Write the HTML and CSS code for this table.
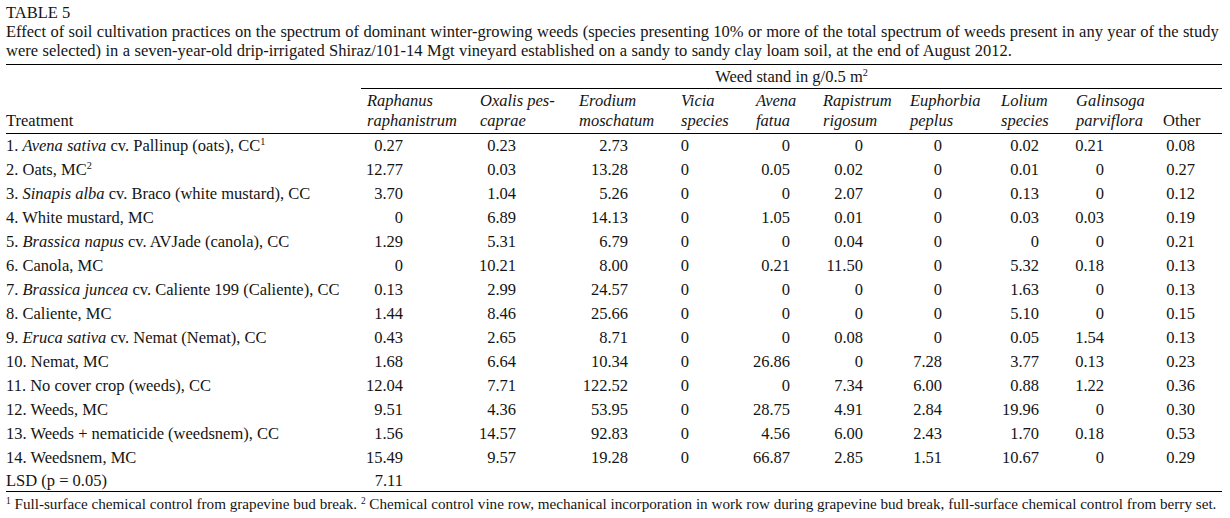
FILE: index.html
```html
<!DOCTYPE html>
<html lang="en">
<head>
<meta charset="utf-8">
<title>Table 5</title>
<link rel="stylesheet" href="styles.css">
</head>
<body>
<div class="page">
  <div class="title">TABLE 5</div>
  <p class="caption">Effect of soil cultivation practices on the spectrum of dominant winter-growing weeds (species presenting 10% or more of the total spectrum of weeds present in any year of the study<br>were selected) in a seven-year-old drip-irrigated Shiraz/101-14 Mgt vineyard established on a sandy to sandy clay loam soil, at the end of August 2012.</p>
  <table class="data">
    <colgroup>
      <col class="c-treat"><col class="c-rap"><col class="c-oxa"><col class="c-ero"><col class="c-vic"><col class="c-ave"><col class="c-rpi"><col class="c-eup"><col class="c-lol"><col class="c-gal"><col class="c-oth">
    </colgroup>
    <thead>
      <tr class="span-row"><th></th><th colspan="10" class="span">Weed stand in g/0.5 m<sup>2</sup></th></tr>
      <tr class="head-row">
        <th class="treat">Treatment</th>
        <th><i>Raphanus</i><br><i>raphanistrum</i></th>
        <th><i>Oxalis pes-</i><br><i>caprae</i></th>
        <th><i>Erodium</i><br><i>moschatum</i></th>
        <th><i>Vicia</i><br><i>species</i></th>
        <th><i>Avena</i><br><i>fatua</i></th>
        <th><i>Rapistrum</i><br><i>rigosum</i></th>
        <th><i>Euphorbia</i><br><i>peplus</i></th>
        <th><i>Lolium</i><br><i>species</i></th>
        <th><i>Galinsoga</i><br><i>parviflora</i></th>
        <th>Other</th>
      </tr>
    </thead>
    <tbody>
      <tr><td>1. <i>Avena sativa</i> cv. Pallinup (oats), CC<sup>1</sup></td><td>0.27</td><td>0.23</td><td>2.73</td><td>0</td><td>0</td><td>0</td><td>0</td><td>0.02</td><td>0.21</td><td>0.08</td></tr>
      <tr><td>2. Oats, MC<sup>2</sup></td><td>12.77</td><td>0.03</td><td>13.28</td><td>0</td><td>0.05</td><td>0.02</td><td>0</td><td>0.01</td><td>0</td><td>0.27</td></tr>
      <tr><td>3. <i>Sinapis alba</i> cv. Braco (white mustard), CC</td><td>3.70</td><td>1.04</td><td>5.26</td><td>0</td><td>0</td><td>2.07</td><td>0</td><td>0.13</td><td>0</td><td>0.12</td></tr>
      <tr><td>4. White mustard, MC</td><td>0</td><td>6.89</td><td>14.13</td><td>0</td><td>1.05</td><td>0.01</td><td>0</td><td>0.03</td><td>0.03</td><td>0.19</td></tr>
      <tr><td>5. <i>Brassica napus</i> cv. AVJade (canola), CC</td><td>1.29</td><td>5.31</td><td>6.79</td><td>0</td><td>0</td><td>0.04</td><td>0</td><td>0</td><td>0</td><td>0.21</td></tr>
      <tr><td>6. Canola, MC</td><td>0</td><td>10.21</td><td>8.00</td><td>0</td><td>0.21</td><td>11.50</td><td>0</td><td>5.32</td><td>0.18</td><td>0.13</td></tr>
      <tr><td>7. <i>Brassica juncea</i> cv. Caliente 199 (Caliente), CC</td><td>0.13</td><td>2.99</td><td>24.57</td><td>0</td><td>0</td><td>0</td><td>0</td><td>1.63</td><td>0</td><td>0.13</td></tr>
      <tr><td>8. Caliente, MC</td><td>1.44</td><td>8.46</td><td>25.66</td><td>0</td><td>0</td><td>0</td><td>0</td><td>5.10</td><td>0</td><td>0.15</td></tr>
      <tr><td>9. <i>Eruca sativa</i> cv. Nemat (Nemat), CC</td><td>0.43</td><td>2.65</td><td>8.71</td><td>0</td><td>0</td><td>0.08</td><td>0</td><td>0.05</td><td>1.54</td><td>0.13</td></tr>
      <tr><td>10. Nemat, MC</td><td>1.68</td><td>6.64</td><td>10.34</td><td>0</td><td>26.86</td><td>0</td><td>7.28</td><td>3.77</td><td>0.13</td><td>0.23</td></tr>
      <tr><td>11. No cover crop (weeds), CC</td><td>12.04</td><td>7.71</td><td>122.52</td><td>0</td><td>0</td><td>7.34</td><td>6.00</td><td>0.88</td><td>1.22</td><td>0.36</td></tr>
      <tr><td>12. Weeds, MC</td><td>9.51</td><td>4.36</td><td>53.95</td><td>0</td><td>28.75</td><td>4.91</td><td>2.84</td><td>19.96</td><td>0</td><td>0.30</td></tr>
      <tr><td>13. Weeds + nematicide (weedsnem), CC</td><td>1.56</td><td>14.57</td><td>92.83</td><td>0</td><td>4.56</td><td>6.00</td><td>2.43</td><td>1.70</td><td>0.18</td><td>0.53</td></tr>
      <tr><td>14. Weedsnem, MC</td><td>15.49</td><td>9.57</td><td>19.28</td><td>0</td><td>66.87</td><td>2.85</td><td>1.51</td><td>10.67</td><td>0</td><td>0.29</td></tr>
      <tr class="lsd"><td>LSD (p = 0.05)</td><td>7.11</td><td></td><td></td><td></td><td></td><td></td><td></td><td></td><td></td><td></td></tr>
    </tbody>
  </table>
  <p class="foot"><sup>1</sup> Full-surface chemical control from grapevine bud break. <sup>2</sup> Chemical control vine row, mechanical incorporation in work row during grapevine bud break, full-surface chemical control from berry set.</p>
</div>
</body>
</html>
```
FILE: styles.css
```css
body {
  margin: 0;
  background: #ffffff;
  color: #141414;
  font-family: "Liberation Serif", "Times New Roman", serif;
  font-size: 16.5px;
}

.page {
  padding: 3px 8px 0 6px;
}

.title {
  line-height: 19px;
}

.caption {
  margin: 0;
  line-height: 19px;
  word-spacing: 0.3px;
}

sup {
  font-size: 0.62em;
  line-height: 0;
  vertical-align: 0.55em;
}

.data {
  margin-top: 4px;
  width: 1216px;
  table-layout: fixed;
  border-collapse: collapse;
  border-top: 1px solid #000;
}

.c-treat { width: 355px; }
.c-rap { width: 113px; }
.c-oxa { width: 99px; }
.c-ero { width: 102px; }
.c-vic { width: 75px; }
.c-ave { width: 67px; }
.c-rpi { width: 87px; }
.c-eup { width: 91px; }
.c-lol { width: 75px; }
.c-gal { width: 87px; }
.c-oth { width: 65px; }

.data th {
  font-weight: normal;
  text-align: left;
  padding: 0 0 0 6px;
  white-space: nowrap;
}

.span-row th {
  height: 23px;
  line-height: 20px;
  vertical-align: middle;
}

.span-row .span {
  text-align: center;
  border-bottom: 1px solid #000;
  padding: 0;
}

.head-row th {
  vertical-align: bottom;
  line-height: 20px;
  padding-top: 2px;
  padding-bottom: 2px;
  border-bottom: 1px solid #000;
}

.head-row .treat {
  padding-left: 0;
}

.data td {
  height: 24px;
  padding: 0;
  line-height: 20px;
  text-align: right;
  white-space: nowrap;
}

.data td:first-child {
  text-align: left;
}

.data td:nth-child(2) { padding-right: 71px; }
.data td:nth-child(3) { padding-right: 57px; }
.data td:nth-child(4) { padding-right: 47px; }
.data td:nth-child(5) { padding-right: 61px; }
.data td:nth-child(6) { padding-right: 27px; }
.data td:nth-child(7) { padding-right: 41px; }
.data td:nth-child(8) { padding-right: 53px; }
.data td:nth-child(9) { padding-right: 31px; }
.data td:nth-child(10) { padding-right: 53px; }
.data td:nth-child(11) { padding-right: 27px; }

.lsd td {
  height: 21px;
  border-bottom: 1px solid #000;
}

.foot {
  margin: 0;
  padding-top: 2px;
  line-height: 19px;
  font-size: 15.15px;
  white-space: nowrap;
}
```
